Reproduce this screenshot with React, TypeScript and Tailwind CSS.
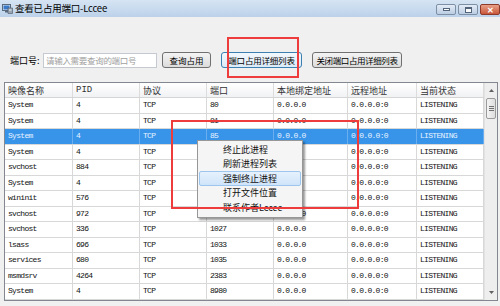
import React from "react";

const rows: string[][] = [
  ["System", "4", "TCP", "80"],
  ["System", "4", "TCP", "81"],
  ["System", "4", "TCP", "85"],
  ["System", "4", "TCP", ""],
  ["svchost", "884", "TCP", ""],
  ["System", "4", "TCP", ""],
  ["wininit", "576", "TCP", ""],
  ["svchost", "972", "TCP", "1026"],
  ["svchost", "336", "TCP", "1027"],
  ["lsass", "696", "TCP", "1033"],
  ["services", "680", "TCP", "1035"],
  ["msmdsrv", "4264", "TCP", "2383"],
  ["System", "4", "TCP", "8980"],
];

const widths = ["w-[68px]", "w-[67px]", "w-[67px]", "w-[67px]", "w-[74px]", "w-[69px]", "w-[67px]"];
const headers = ["映像名称", "PID", "协议", "端口", "本地绑定地址", "远程地址", "当前状态"];

const cjk = { fontFamily: '"Noto Sans CJK SC", "Noto Sans", sans-serif' };
const mono = { fontFamily: '"Liberation Mono", "Noto Sans CJK SC", monospace' };

export default function App() {
  return (
    <div className="relative w-[500px] h-[306px] overflow-hidden bg-[#f0f0f0] text-black" style={cjk}>
      {/* Title bar */}
      <div className="h-[17px] flex items-center bg-gradient-to-b from-[#d6e4f3] to-[#bcd2ea] pl-[2px]">
        <svg width="11" height="11" viewBox="0 0 11 11" className="mr-[2px]">
          <rect x="0.5" y="1.5" width="8" height="6" fill="#dfe8f2" stroke="#5a6b80" />
          <rect x="1.5" y="2.5" width="6" height="4" fill="#3a78c8" />
          <rect x="3" y="8" width="3" height="1.5" fill="#5a6b80" />
          <path d="M6 5 L10.5 5 L10.5 10.5 L6 10.5 Z" fill="#9aa6b4" stroke="#4a5664" strokeWidth="0.6" />
          <rect x="7" y="6.5" width="2.5" height="1" fill="#e8eef5" />
        </svg>
        <span className="text-[9.5px] leading-none tracking-[-0.2px]">查看已占用端口-Lccee</span>
        <div className="ml-auto flex items-start gap-[2px] self-start pt-[4px]">
          <div className="w-[20px] h-[11px] rounded-[2px] border border-[#7d8fa5] bg-gradient-to-b from-[#e3ecf6] to-[#bccde3] flex items-center justify-center">
            <div className="w-[7px] h-[3px] bg-[#f8fafc] border border-[#53637a]" />
          </div>
          <div className="w-[20px] h-[11px] rounded-[2px] border border-[#7d8fa5] bg-gradient-to-b from-[#e3ecf6] to-[#bccde3] flex items-center justify-center">
            <div className="w-[7px] h-[6px] bg-[#f8fafc] border border-[#53637a] border-t-2" />
          </div>
          <div className="w-[20px] h-[11px] rounded-[2px] border border-[#8d3a2a] bg-gradient-to-b from-[#e8a088] to-[#c8563a] flex items-center justify-center text-white text-[8px] font-bold leading-none">
            ✕
          </div>
        </div>
      </div>

      {/* Query row */}
      <div className="mt-[35px] h-[16px] flex items-center">
        <span className="ml-[10px] w-[33px] text-[9px] leading-none whitespace-nowrap">端口号:</span>
        <div className="w-[114px] h-[15px] bg-white border border-[#c5c9d0] flex items-center pl-[2px]">
          <span className="text-[8.5px] leading-none text-[#a0a0a0] tracking-[-0.3px] whitespace-nowrap">请输入需要查询的端口号</span>
        </div>
        <button className="ml-[5px] w-[49px] h-[16px] rounded-[3px] border border-[#707070] bg-gradient-to-b from-[#f4f4f4] to-[#dcdcdc] text-[8.5px] leading-none flex items-center justify-center whitespace-nowrap">
          查询占用
        </button>
        <button className="ml-[10px] w-[81px] h-[16px] rounded-[3px] border border-[#3c7fb1] bg-gradient-to-b from-[#f2f8fd] to-[#dbeaf7] text-[8.5px] tracking-[-0.2px] leading-none flex items-center justify-center whitespace-nowrap">
          端口占用详细列表
        </button>
        <button className="ml-[10px] w-[90px] h-[16px] rounded-[3px] border border-[#707070] bg-gradient-to-b from-[#f4f4f4] to-[#dcdcdc] text-[8.5px] tracking-[-0.4px] leading-none flex items-center justify-center whitespace-nowrap">
          关闭端口占用详细列表
        </button>
      </div>

      {/* Table */}
      <div className="mt-[14px] ml-[4px] w-[494px] h-[219px] border border-[#828790] bg-white flex">
        <div className="w-[479px] flex flex-col">
          <div className="h-[15px] flex border-b border-[#d5d5d5] bg-gradient-to-b from-[#ffffff] to-[#f1f2f4]">
            {headers.map((h, i) => (
              <div
                key={i}
                className={`${widths[i]} h-full border-r border-[#dcdcdc] pl-[3px] flex items-center text-[9px] leading-none text-[#333] whitespace-nowrap`}
                style={h === "PID" ? mono : cjk}
              >
                {h}
              </div>
            ))}
          </div>
          {rows.map((r, ri) => {
            const sel = ri === 2;
            const hidden = ri >= 3 && ri <= 6;
            const cells = [...r, hidden ? "" : "0.0.0.0", "0.0.0.0:0", "LISTENING"];
            return (
              <div
                key={ri}
                className={`h-[15.5px] flex border-b border-[#d8d8d8] ${sel ? "bg-[#3794e9] text-[#e8f2ff]" : "text-[#111]"}`}
              >
                {cells.map((c, ci) => (
                  <div
                    key={ci}
                    className={`${widths[ci]} h-full border-r ${sel ? "border-[#6aaef0]" : "border-[#d8d8d8]"} pl-[3px] flex items-center text-[8px] leading-none tracking-[-0.7px] whitespace-nowrap overflow-hidden`}
                    style={mono}
                  >
                    {c}
                  </div>
                ))}
              </div>
            );
          })}
        </div>
        {/* Scrollbar */}
        <div className="w-[13px] h-full bg-[#eeeeee] border-l border-[#e2e2e2] flex flex-col">
          <div className="h-[15px] flex items-center justify-center">
            <svg width="5" height="3" viewBox="0 0 5 3"><path d="M0 3 L2.5 0 L5 3 Z" fill="#606060" /></svg>
          </div>
          <div className="mx-[1px] h-[21px] rounded-[2px] border border-[#9a9a9a] bg-gradient-to-r from-[#f4f4f4] to-[#dedede] flex flex-col items-center justify-center gap-[1px]">
            <div className="w-[5px] h-[1px] bg-[#707070]" />
            <div className="w-[5px] h-[1px] bg-[#707070]" />
            <div className="w-[5px] h-[1px] bg-[#707070]" />
          </div>
          <div className="flex-1" />
          <div className="h-[15px] flex items-center justify-center">
            <svg width="5" height="3" viewBox="0 0 5 3"><path d="M0 0 L2.5 3 L5 0 Z" fill="#606060" /></svg>
          </div>
        </div>
      </div>

      {/* Context menu */}
      <div className="absolute left-[197px] top-[140px] w-[106px] pt-[1px] pb-[2px] bg-[#f5f5f5] border border-[#979797] shadow-[2px_2px_2px_rgba(0,0,0,0.4)] flex flex-col">
        {["终止此进程", "刷新进程列表", "强制终止进程", "打开文件位置", "联系作者Lccee"].map((t, i) => (
          <div
            key={i}
            className={`h-[14.5px] mx-[1px] flex items-center pl-[23px] text-[9px] leading-none text-[#111] whitespace-nowrap ${i === 2 ? "bg-gradient-to-b from-[#e6f1fc] to-[#cfe4fa] border border-[#9dc6ee] rounded-[2px]" : "border border-transparent"}`}
          >
            {t}
          </div>
        ))}
      </div>

      {/* Red annotations */}
      <div className="absolute left-[227px] top-[37px] w-[72px] h-[41px] border-2 border-[#ee3b3b]" />
      <div className="absolute left-[171px] top-[120px] w-[188px] h-[89px] border-2 border-[#ee3b3b]" />
    </div>
  );
}
